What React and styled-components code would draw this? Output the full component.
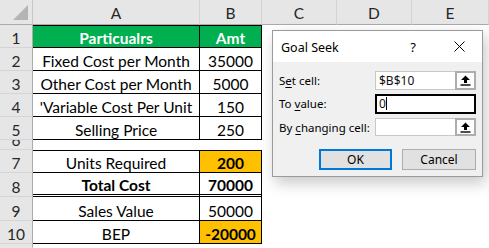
import React from "react";
import styled, { createGlobalStyle } from "styled-components";

const Global = createGlobalStyle`
  html, body { margin: 0; padding: 0; background: #fff; }
  body { width: 489px; height: 248px; overflow: hidden; }
`;

const Sheet = styled.div`
  position: relative;
  width: 489px;
  height: 248px;
  display: grid;
  grid-template-columns: 33px 167px 62px 75px 75px 1fr;
  grid-template-rows: 25px 23px 23px 23px 23px 23px 10px 23px 24px 24px 23px 1fr;
  font-family: Lato, "Noto Sans", sans-serif;
  font-size: 15.5px;
  color: #000;
  overflow: hidden;
`;

const Corner = styled.div`
  position: relative;
  background: #e6e6e6;
  border-right: 1px solid #c6c6c6;
  border-bottom: 1px solid #ababab;
  box-sizing: border-box;
  &::after {
    content: "";
    position: absolute;
    right: 4px;
    bottom: 4px;
    width: 0;
    height: 0;
    border-left: 15px solid transparent;
    border-bottom: 15px solid #b4b4b4;
  }
`;

const ColHead = styled.div`
  background: #e6e6e6;
  border-right: 1px solid #d4d4d4;
  border-bottom: 1px solid #ababab;
  box-sizing: border-box;
  display: flex;
  align-items: flex-end;
  justify-content: center;
  padding-bottom: 2px;
  color: #262626;
  font-size: 15.5px;
  line-height: 18px;
`;

const RowHead = styled.div`
  background: #e6e6e6;
  border-right: 1px solid #ababab;
  border-bottom: 1px solid ${(p) => (p.$last ? "transparent" : "#d4d4d4")};
  box-sizing: border-box;
  display: flex;
  align-items: flex-end;
  justify-content: center;
  color: #262626;
  font-size: 15.5px;
  line-height: 18px;
  overflow: hidden;
`;

const Cell = styled.div`
  box-sizing: border-box;
  background: ${(p) => p.$bg || "#fff"};
  color: ${(p) => p.$color || "#000"};
  font-weight: ${(p) => (p.$bold ? 700 : 400)};
  border-right: ${(p) => (p.$boxed ? "1px solid #000" : "none")};
  border-bottom: ${(p) =>
    p.$double ? "3px double #000" : p.$boxed ? "1px solid #000" : "none"};
  border-top: ${(p) => (p.$top ? "1px solid #000" : "none")};
  display: flex;
  align-items: flex-end;
  justify-content: center;
  line-height: 18px;
  white-space: nowrap;
  overflow: hidden;
`;

const Dialog = styled.div`
  position: absolute;
  left: 272px;
  top: 30px;
  width: 211px;
  height: 147px;
  box-sizing: border-box;
  border: 1px solid #9a9a9a;
  background: #f0f0f0;
  box-shadow: 3px 6px 14px rgba(0, 0, 0, 0.22);
  font-family: "Noto Sans", sans-serif;
  font-size: 11.5px;
  color: #000;
  display: flex;
  flex-direction: column;
`;

const TitleBar = styled.div`
  height: 31px;
  background: #fff;
  display: flex;
  align-items: center;
  padding-left: 8px;
`;

const Title = styled.div`
  flex: 1;
  font-size: 12.5px;
  padding-top: 2px;
`;

const TitleBtn = styled.div`
  width: 46px;
  height: 31px;
  display: flex;
  align-items: center;
  justify-content: center;
  font-size: 13px;
`;

const Body = styled.div`
  display: flex;
  flex-direction: column;
  padding: 8px 6px 0 6px;
`;

const Fields = styled.div`
  display: grid;
  grid-template-columns: 96px 101px;
  grid-auto-rows: 20px;
  row-gap: 3.5px;
  align-items: center;
`;

const Label = styled.div`
  white-space: nowrap;
`;

const Key = styled.span`
  text-decoration: underline;
  text-underline-offset: 2px;
`;

const InputWrap = styled.div`
  display: flex;
  height: ${(p) => p.$h || 19}px;
`;

const TextBox = styled.div`
  flex: 1;
  box-sizing: border-box;
  background: #fff;
  border: ${(p) => (p.$focus ? "2px solid #000" : "1px solid #c8c8c8")};
  border-right: ${(p) => (p.$focus ? "2px solid #000" : "none")};
  display: flex;
  align-items: center;
  padding-left: ${(p) => (p.$focus ? 2 : 3)}px;
  font-size: 12px;
  color: #111;
`;

const Caret = styled.span`
  display: inline-block;
  width: 1px;
  height: 13px;
  background: #000;
  margin-left: 0.5px;
`;

const RefButton = styled.div`
  width: 21px;
  box-sizing: border-box;
  border: 2px solid #adadad;
  background: #fdfdfd;
  display: flex;
  align-items: center;
  justify-content: center;
`;

const Buttons = styled.div`
  display: flex;
  justify-content: flex-end;
  gap: 10px;
  margin-top: 12px;
`;

const Button = styled.div`
  width: ${(p) => p.$w}px;
  height: 21px;
  box-sizing: border-box;
  background: #e1e1e1;
  border: ${(p) => (p.$primary ? "2px solid #0078d7" : "1px solid #adadad")};
  display: flex;
  align-items: center;
  justify-content: center;
  font-size: 12px;
`;

const UpArrow = () => (
  <svg width="11" height="11" viewBox="0 0 11 11">
    <polygon points="5.5,0.5 10,5 7,5 7,8 4,8 4,5 1,5" fill="#000" />
    <rect x="0.5" y="9.3" width="10" height="1.4" fill="#000" />
  </svg>
);

const CloseX = () => (
  <svg width="11" height="11" viewBox="0 0 11 11">
    <path d="M0.5 0.5 L10.5 10.5 M10.5 0.5 L0.5 10.5" stroke="#000" strokeWidth="1" />
  </svg>
);

const rows = [
  { n: 1, a: "Particualrs", b: "Amt", head: true },
  { n: 2, a: "Fixed Cost per Month", b: "35000" },
  { n: 3, a: "Other Cost per Month", b: "5000" },
  { n: 4, a: "'Variable Cost Per Unit", b: "150" },
  { n: 5, a: "Selling Price", b: "250" },
  { n: 6, empty: true },
  { n: 7, a: "Units Required", b: "200", bBold: true, bBg: "#ffc000", top: true },
  { n: 8, a: "Total Cost", b: "70000", aBold: true, bBold: true, double: true },
  { n: 9, a: "Sales Value", b: "50000" },
  { n: 10, a: "BEP", b: "-20000", bBold: true, bBg: "#ffc000" },
  { n: 11, blank: true },
];

export default function App() {
  return (
    <>
      <Global />
      <Sheet>
        <Corner />
        {["A", "B", "C", "D", "E"].map((c) => (
          <ColHead key={c}>{c}</ColHead>
        ))}
        {rows.map((r) => (
          <React.Fragment key={r.n}>
            <RowHead $last={r.blank}>{r.blank ? "" : r.n}</RowHead>
            {r.empty || r.blank ? (
              <>
                <Cell />
                <Cell />
              </>
            ) : (
              <>
                <Cell
                  $boxed
                  $double={r.double}
                  $top={r.head || r.top}
                  $bg={r.head ? "#00b050" : undefined}
                  $color={r.head ? "#fff" : undefined}
                  $bold={r.head || r.aBold}
                >
                  {r.a}
                </Cell>
                <Cell
                  $boxed
                  $double={r.double}
                  $top={r.head || r.top}
                  $bg={r.head ? "#00b050" : r.bBg}
                  $color={r.head ? "#fff" : undefined}
                  $bold={r.head || r.bBold}
                >
                  {r.b}
                </Cell>
              </>
            )}
            <Cell />
            <Cell />
            <Cell />
          </React.Fragment>
        ))}

        <Dialog>
          <TitleBar>
            <Title>Goal Seek</Title>
            <TitleBtn>?</TitleBtn>
            <TitleBtn>
              <CloseX />
            </TitleBtn>
          </TitleBar>
          <Body>
            <Fields>
              <Label>
                S<Key>e</Key>t cell:
              </Label>
              <InputWrap>
                <TextBox>$B$10</TextBox>
                <RefButton>
                  <UpArrow />
                </RefButton>
              </InputWrap>
              <Label>
                To <Key>v</Key>alue:
              </Label>
              <InputWrap $h={20}>
                <TextBox $focus>
                  0<Caret />
                </TextBox>
              </InputWrap>
              <Label>
                By <Key>c</Key>hanging cell:
              </Label>
              <InputWrap $h={18}>
                <TextBox />
                <RefButton>
                  <UpArrow />
                </RefButton>
              </InputWrap>
            </Fields>
            <Buttons>
              <Button $primary $w={73}>OK</Button>
              <Button $w={74}>Cancel</Button>
            </Buttons>
          </Body>
        </Dialog>
      </Sheet>
    </>
  );
}
